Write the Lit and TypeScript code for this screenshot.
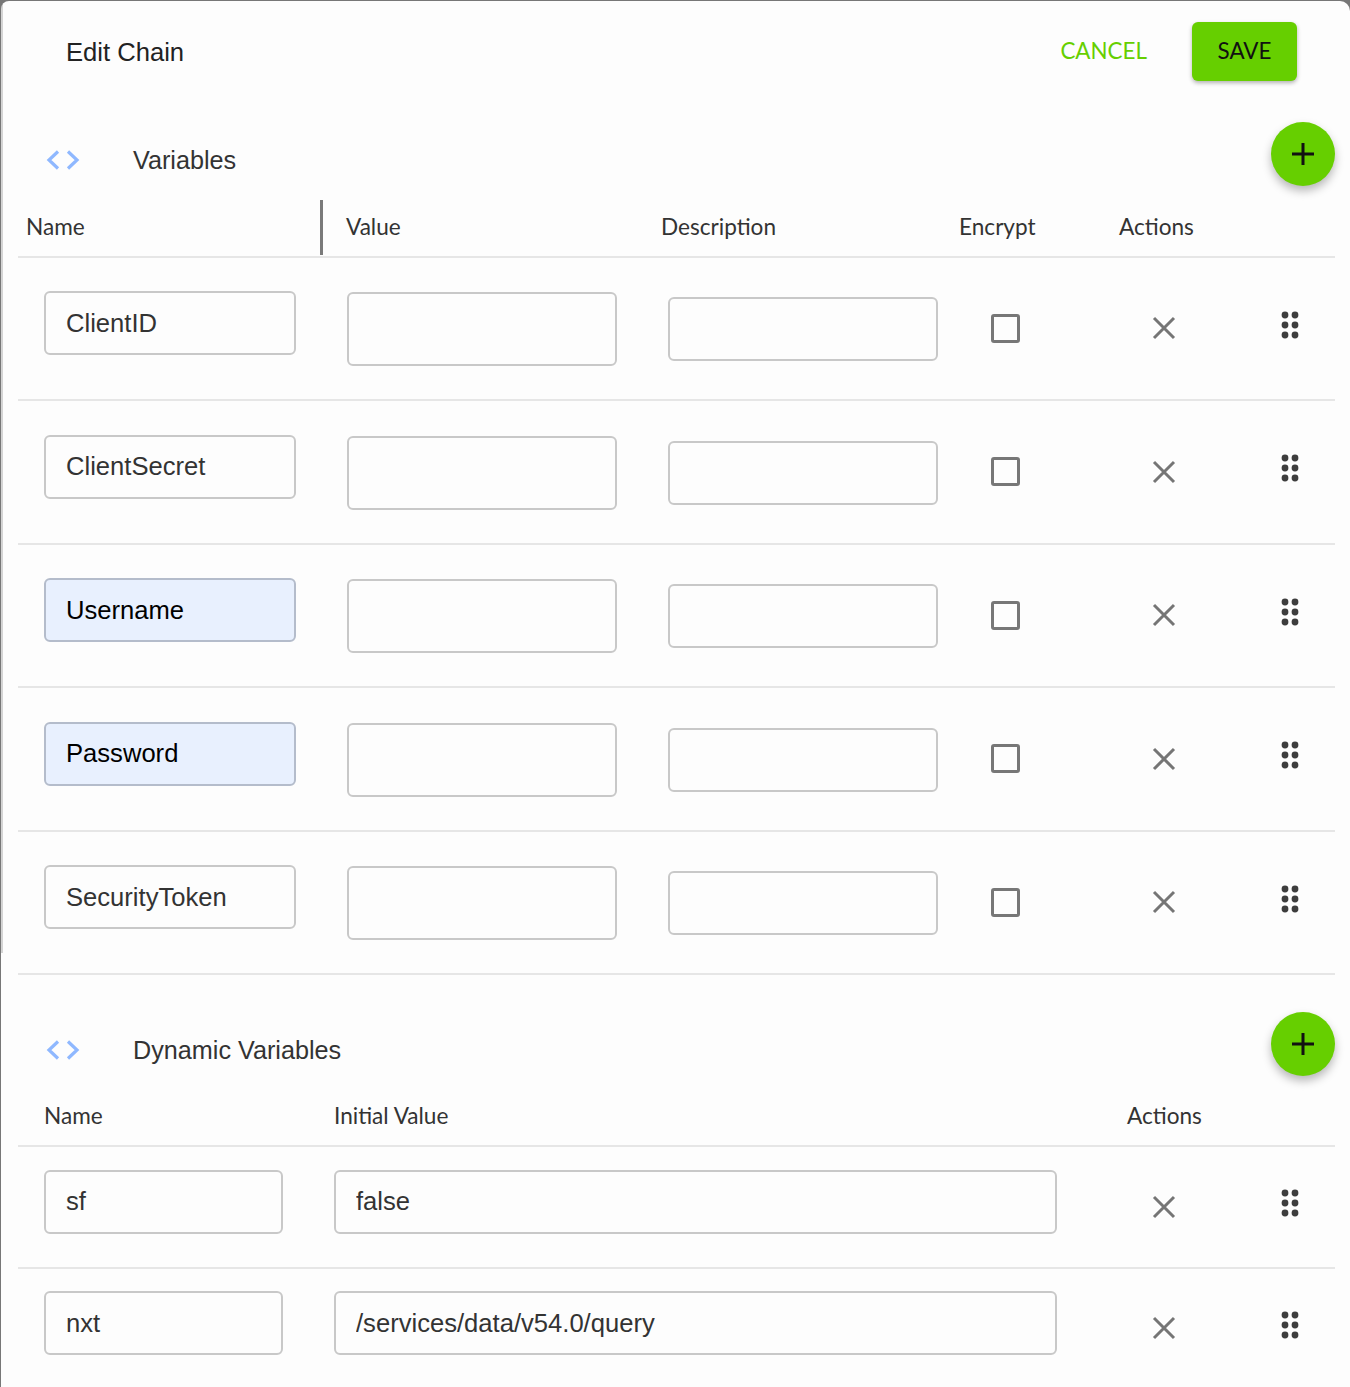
import { LitElement, html, css, svg } from "lit";
import { customElement } from "lit/decorators.js";

const vars = [
  { name: "ClientID", filled: false },
  { name: "ClientSecret", filled: false },
  { name: "Username", filled: true },
  { name: "Password", filled: true },
  { name: "SecurityToken", filled: false },
];
const dyn = [
  { name: "sf", value: "false" },
  { name: "nxt", value: "/services/data/v54.0/query" },
];

const chevrons = html`<svg class="chev" viewBox="0 0 34 20" width="34" height="20">
  <path d="M12 1.5 3 10l9 8.5M22 1.5 31 10l-9 8.5" fill="none" stroke="#8fb8ff" stroke-width="3.2"/>
</svg>`;
const plus = svg`<path d="M12 1v22M1 12h22" stroke="#111" stroke-width="3" fill="none"/>`;
const closeIcon = html`<svg class="x" viewBox="0 0 24 24" width="24" height="24">
  <path d="M2 2l20 20M22 2 2 22" stroke="#757575" stroke-width="3" fill="none"/>
</svg>`;
const dots = html`<svg class="dots" viewBox="0 0 20 30" width="20" height="30">
  ${[5, 15].map((x) => [5, 15, 25].map((y) => svg`<circle cx=${x} cy=${y} r="3.4" fill="#3d3d3d"/>`))}
</svg>`;

@customElement("app-root")
export class AppRoot extends LitElement {
  static styles = css`
    :host { display: block; background: #777; height: 1387px; overflow: hidden; font-family: "Liberation Sans", Arial, sans-serif; }
    * { box-sizing: border-box; }
    .shell { margin: 1px 0 0 1px; height: 1386px; background: linear-gradient(#d4d4d4, #d4d4d4) left top / 2px 952px no-repeat, #fdfdfd; border-radius: 8px 10px 0 0; padding: 0 15px 0 17px; }
    .top { height: 103px; display: flex; align-items: center; }
    .title { margin-left: 48px; font-size: 25.6px; color: #222; flex: 1; }
    .cancel, .save { font-family: Lato, sans-serif; font-size: 22.4px; line-height: 1; }
    .cancel { color: #66cf00; margin-right: 45px; margin-top: -3px; }
    .save { width: 105px; height: 59px; margin: -2px 38px 0 0; background: #66cf00; color: #111; border-radius: 6px; display: flex; align-items: center; justify-content: center; box-shadow: 0 2px 4px rgba(0,0,0,.3); }
    .head { height: 97px; padding-top: 18px; display: flex; align-items: flex-start; }
    .head.second { height: 114.5px; padding-top: 36.5px; }
    .chev { margin: 28px 0 0 28px; flex: none; }
    .head-title { margin: 23px 0 0 53px; font-size: 25.2px; line-height: 30px; color: #333; flex: 1; }
    .fab { width: 64px; height: 64px; border-radius: 50%; background: #66cf00; display: flex; align-items: center; justify-content: center; box-shadow: 0 5px 10px rgba(0,0,0,.28); flex: none; }
    .grid-v { display: grid; grid-template-columns: 303px 316px 298px 159px 1fr; }
    .grid-d { display: grid; grid-template-columns: 316px 793px 123px 1fr; }
    .labels { font-family: Lato, sans-serif; font-size: 22.6px; color: #333; border-bottom: 2px solid #e6e6e6; align-items: center; }
    .labels.v { height: 57.5px; margin-top: -1px; position: relative; }
    .labels.v span:nth-child(1) { padding-left: 8px; }
    .labels.v span:nth-child(2) { padding-left: 25px; }
    .labels.v span:nth-child(3) { padding-left: 24px; }
    .labels.v span:nth-child(4) { padding-left: 24px; }
    .labels.v span:nth-child(5) { padding-left: 25px; }
    .labels.d { height: 57.5px; }
    .labels.d span:first-child { padding-left: 26px; }
    .labels span { position: relative; top: -1px; }
    .labels.d span { top: -2px; }
    .rule { position: absolute; left: 302px; top: 0; width: 3px; height: 55px; background: #7a7a7a; }
    .row { height: 143.5px; border-bottom: 2px solid #e6e6e6; align-items: center; }
    .row.dyn { height: 121.5px; }
    input[type="text"] { font: 25.6px "Liberation Sans", Arial, sans-serif; color: #333; background: #fdfdfd; border: 2px solid #c8c8c8; border-radius: 6px; padding: 0 20px; height: 64px; outline: none; display: block; }
    .n { width: 252px; margin: -10px 0 0 26px; }
    input[type="text"].n.filled { background: #e8f0fe; border-color: #b4bccb; color: #000; }
    input[type="text"].val { width: 270px; height: 74px; margin: 2px 0 0 26px; }
    .desc { width: 270px; margin: 2px 0 0 31px; }
    .check { margin-left: 55.5px; width: 29px; height: 29px; border: 3px solid #777; border-radius: 3px; background: #fdfdfd; }
    .acts { display: flex; align-items: center; }
    .x { margin-left: 58px; flex: none; }
    .dots { margin-left: 104px; margin-top: -7px; flex: none; }
    .dn { width: 239px; margin: -10px 0 0 26px; }
    .dv { width: 723px; margin: -10px 0 0 0; }
    .dyn .x { margin-left: 0; }
    .dyn .acts { grid-column: 3 / 5; padding-left: 25px; }
  `;

  render() {
    return html`<div class="shell">
      <div class="top">
        <div class="title">Edit Chain</div>
        <div class="cancel">CANCEL</div>
        <div class="save">SAVE</div>
      </div>
      <div class="head">
        ${chevrons}
        <div class="head-title">Variables</div>
        <div class="fab"><svg viewBox="0 0 24 24" width="24" height="24">${plus}</svg></div>
      </div>
      <div class="grid-v labels v">
        <span>Name</span><span>Value</span><span>Description</span><span>Encrypt</span><span>Actions</span>
        <div class="rule"></div>
      </div>
      ${vars.map(
        (v) => html`<div class="grid-v row">
          <input type="text" class="n ${v.filled ? "filled" : ""}" .value=${v.name} />
          <input type="text" class="val" />
          <input type="text" class="desc" />
          <div class="check"></div>
          <div class="acts">${closeIcon}${dots}</div>
        </div>`
      )}
      <div class="head second">
        ${chevrons}
        <div class="head-title">Dynamic Variables</div>
        <div class="fab"><svg viewBox="0 0 24 24" width="24" height="24">${plus}</svg></div>
      </div>
      <div class="grid-d labels d">
        <span>Name</span><span>Initial Value</span><span>Actions</span>
      </div>
      ${dyn.map(
        (d) => html`<div class="grid-d row dyn">
          <input type="text" class="dn" .value=${d.name} />
          <input type="text" class="dv" .value=${d.value} />
          <div class="acts">${closeIcon}${dots}</div>
        </div>`
      )}
    </div>`;
  }
}
